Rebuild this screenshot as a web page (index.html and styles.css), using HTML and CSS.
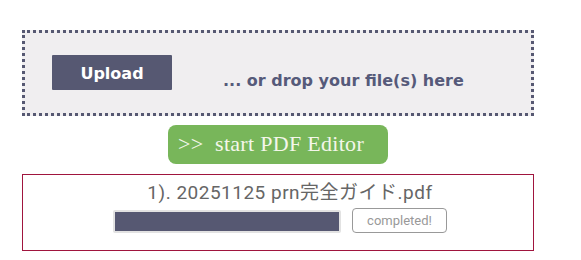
FILE: index.html
```html
<!DOCTYPE html>
<html lang="en">
<head>
  <meta charset="UTF-8">
  <title>PDF Upload</title>
  <link rel="stylesheet" href="styles.css">
</head>
<body>
  <div class="wrap">
    <!-- drop zone -->
    <div class="drop-zone">
      <button class="upload-btn">Upload</button>
      <span class="drop-text">... or drop your file(s) here</span>
    </div>

    <div class="start-row">
      <button class="start-btn">&gt;&gt;&nbsp; start PDF Editor</button>
    </div>

    <!-- uploaded files -->
    <div class="file-list">
      <div class="file-name">1). 20251125 prn完全ガイド.pdf</div>
      <div class="file-status">
        <div class="progress"><div class="progress-fill" style="width: 100%"></div></div>
        <span class="status-tag">completed!</span>
      </div>
    </div>
  </div>
</body>
</html>
```

FILE: styles.css
```css
body {
  margin: 0;
  background: #fff;
  font-family: "DejaVu Sans", Verdana, sans-serif;
}

.wrap {
  width: 512px;
  padding: 30px 0 0 22px;
}

.drop-zone {
  box-sizing: border-box;
  height: 86px;
  display: flex;
  align-items: center;
  gap: 51px;
  padding: 0 0 0 27px;
  background: #f0eef0;
  border: 3px dotted #565872;
}

.upload-btn {
  width: 120px;
  height: 35px;
  margin-top: -2px;
  background: #565872;
  color: #fff;
  border: none;
  border-radius: 1px;
  font-family: "DejaVu Sans", Verdana, sans-serif;
  font-weight: bold;
  font-size: 16px;
  padding: 2px 0 0;
}

.drop-text {
  margin-top: 14px;
  font-size: 16px;
  font-weight: bold;
  color: #565a7a;
}

.start-row {
  display: flex;
  justify-content: center;
  margin-top: 9px;
}

.start-btn {
  width: 220px;
  height: 39px;
  background: #78b65a;
  color: #f4f6ea;
  border: none;
  border-radius: 8px;
  font-family: "Liberation Serif", "Times New Roman", serif;
  font-size: 22px;
  letter-spacing: 0.3px;
  text-align: left;
  padding: 0 0 2px 10px;
}

.file-list {
  box-sizing: border-box;
  height: 77px;
  margin-top: 10px;
  padding-top: 6px;
  border: 1px solid #a0153e;
  font-family: Roboto, "Noto Sans CJK JP", sans-serif;
}

.file-name {
  text-align: center;
  padding-left: 24px;
  font-size: 19px;
  letter-spacing: 0.5px;
  line-height: 24px;
  color: #666;
}

.file-status {
  display: flex;
  justify-content: center;
  align-items: center;
  gap: 11px;
  margin-top: 5px;
  padding-left: 4px;
}

.progress {
  box-sizing: border-box;
  width: 228px;
  height: 23px;
  border: 2px solid #e2e2e2;
  border-radius: 2px;
  background: #fff;
}

.progress-fill {
  height: 100%;
  background: #565872;
}

.status-tag {
  box-sizing: border-box;
  width: 95px;
  height: 25px;
  margin-top: -2px;
  border: 1px solid #999;
  border-radius: 4px;
  color: #999;
  font-size: 13px;
  line-height: 23px;
  text-align: center;
}
```
